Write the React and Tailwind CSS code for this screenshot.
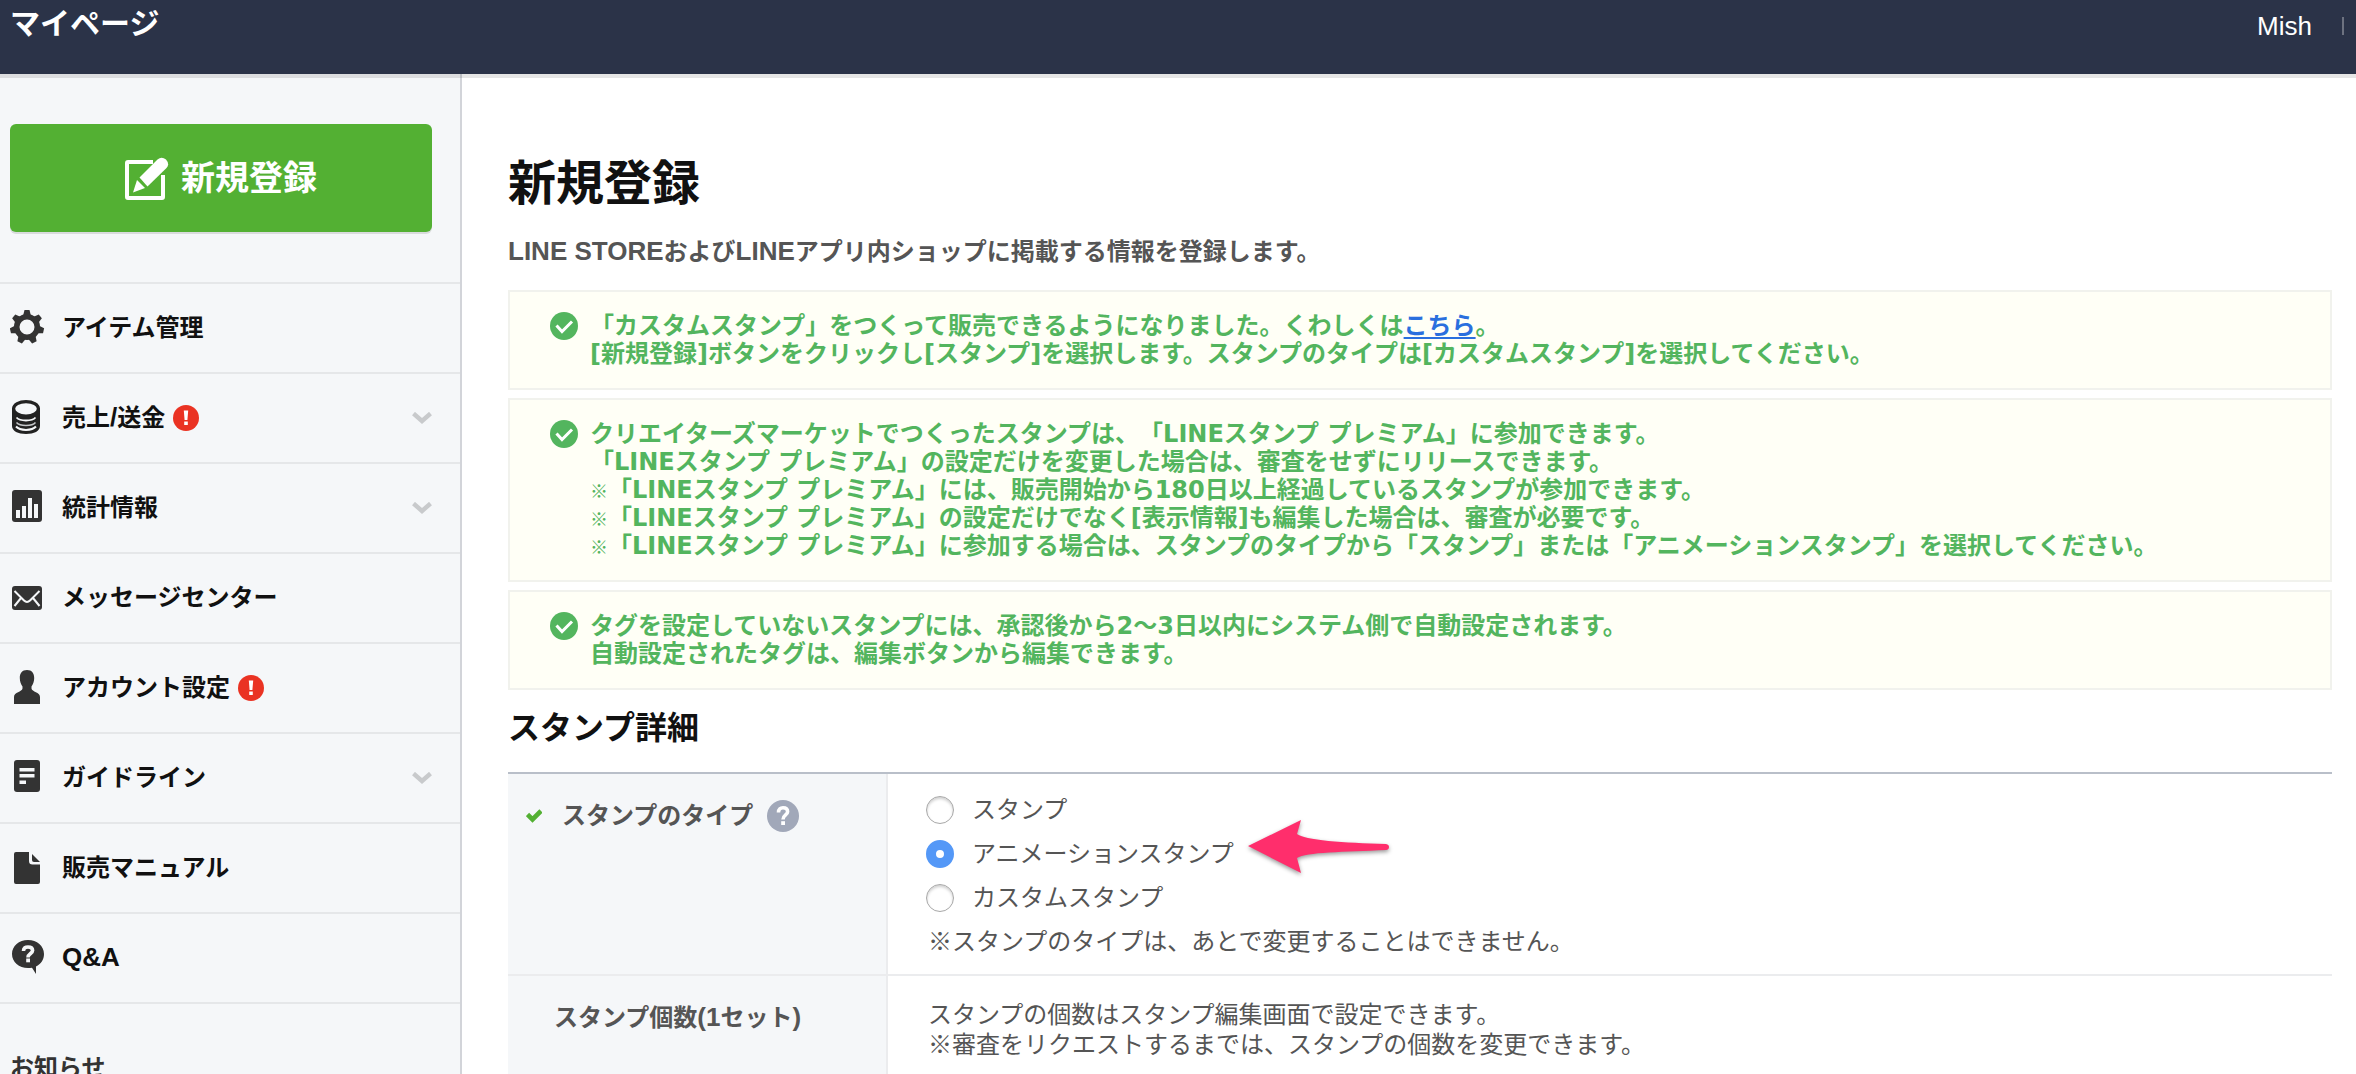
import { useState } from "react"

const menuItems = [
  { id: "items", label: "アイテム管理", icon: GearIcon },
  { id: "sales", label: <>売上<Latin>/</Latin>送金</>, icon: CoinsIcon, alert: true, expandable: true },
  { id: "stats", label: "統計情報", icon: ChartIcon, expandable: true },
  { id: "messages", label: "メッセージセンター", icon: MailIcon },
  { id: "account", label: "アカウント設定", icon: UserIcon, alert: true },
  { id: "guideline", label: "ガイドライン", icon: GuideIcon, expandable: true },
  { id: "manual", label: "販売マニュアル", icon: FileIcon },
  { id: "qa", label: <Latin>Q&A</Latin>, icon: QuestionIcon },
]

const stampTypes = [
  { id: "stamp", label: "スタンプ" },
  { id: "animation", label: "アニメーションスタンプ" },
  { id: "custom", label: "カスタムスタンプ" },
]

// Latin letters are set a little larger so they stand level with the kana
function Latin({ children }) {
  return <span className="text-[26px] leading-none">{children}</span>
}

function GearIcon() {
  return (
    <svg className="w-9 h-9" viewBox="0 0 36 36" fill="#333333">
      {[0, 1, 2, 3, 4, 5, 6].map((tooth) => (
        <path key={tooth} d="M13 6 L14.500 0 H19.500 L21 6 Z" transform={`rotate(${(tooth * 360) / 7} 17 17)`} />
      ))}
      <circle cx="17" cy="17" r="10.300" fill="none" stroke="#333333" strokeWidth="5.600" />
    </svg>
  )
}

function CoinsIcon() {
  return (
    <svg className="w-9 h-9" viewBox="0 0 36 36" fill="none">
      <path d="M2 8 V26 C2 31 8 34 16 34 S30 31 30 26 V8 Z" fill="#222222" />
      <ellipse cx="16" cy="8.800" rx="12.400" ry="7.200" fill="#f5f7f9" stroke="#222222" strokeWidth="3.200" />
      <path d="M6.500 17.500 C10 21.500 22 21.500 25.500 17.500" stroke="#f5f7f9" strokeWidth="1.800" />
      <path d="M6.500 22.500 C10 26.500 22 26.500 25.500 22.500" stroke="#c5c7c9" strokeWidth="1.500" />
      <path d="M6 26.500 C10 31 22 31 26 26.500" stroke="#f5f7f9" strokeWidth="2" />
    </svg>
  )
}

function ChartIcon() {
  return (
    <svg className="w-9 h-9" viewBox="0 0 36 36">
      <rect x="2" y="0" width="30" height="32" rx="3" fill="#333333" />
      <path d="M6 20 h4 v8 h-4 z M12 16 h4 v12 h-4 z M18 8 h4 v20 h-4 z M24 14 h4 v14 h-4 z" fill="#f5f7f9" />
    </svg>
  )
}

function MailIcon() {
  return (
    <svg className="w-9 h-9" viewBox="0 0 36 36" fill="none">
      <rect x="2" y="6" width="30" height="24" rx="3" fill="#333333" />
      <path
        d="M4.500 11 L14 20.500 Q17 23.500 20 20.500 L29.500 11 M4.500 26 L11 18 M29.500 26 L23 18"
        stroke="#f5f7f9"
        strokeWidth="2"
      />
    </svg>
  )
}

function UserIcon() {
  return (
    <svg className="w-9 h-9" viewBox="0 0 36 36" fill="#333333">
      <path d="M17 0 C12 0 9.800 3.500 9.800 8 C9.800 11.500 11 14.500 12.500 16.500 V18.500 C12 22 4 22 4 27 V34 H30 V27 C30 22 22 22 21.500 18.500 V16.500 C23 14.500 24.200 11.500 24.200 8 C24.200 3.500 22 0 17 0 Z" />
    </svg>
  )
}

function GuideIcon() {
  return (
    <svg className="w-9 h-9" viewBox="0 0 36 36">
      <rect x="4" y="0" width="26" height="32" rx="3" fill="#333333" />
      <path d="M9.500 8 h15 v3.600 h-15 z M9.500 14 h15 v3.600 h-15 z M9.500 20.400 h6.500 v3.600 h-6.500 z" fill="#f5f7f9" />
    </svg>
  )
}

function FileIcon() {
  return (
    <svg className="w-9 h-9" viewBox="0 0 36 36" fill="#333333">
      <path d="M6 2 H19 V11 Q19 14.500 22.500 14.500 H30 V32 Q30 34 28 34 H6 Q4 34 4 32 V4 Q4 2 6 2 Z" />
      <path d="M22 4 L30 12 H24 Q22 12 22 10 Z" />
    </svg>
  )
}

function QuestionIcon() {
  return (
    <svg className="w-9 h-9" viewBox="0 0 36 36" fill="none">
      <path
        d="M18 0 C9 0 2 6 2 14 C2 22 9 28 18 28 C19.500 28 20.500 28 22 27.700 L26 34 V26.500 C31 24 34 19.500 34 14 C34 6 27 0 18 0 Z"
        fill="#333333"
      />
      <path d="M13.500 11 C13.500 7.800 15.500 7 18 7 C20.800 7 22.600 8.200 22.600 10.500 C22.600 13.500 18 13.500 18 17.500" stroke="#f5f7f9" strokeWidth="3.600" />
      <rect x="16.200" y="18.500" width="3.800" height="3.800" fill="#f5f7f9" />
    </svg>
  )
}

function PencilIcon() {
  return (
    <svg className="w-11 h-11" viewBox="0 0 44 44" fill="none">
      <path d="M28 6 H3 Q2 6 2 7 V41 Q2 42 3 42 H37 Q38 42 38 41 V19" stroke="white" strokeWidth="4" />
      <path d="M14.500 21.500 L32.500 3.500 Q36.500 0 41 3.500 Q45 8 41.500 12 L22.500 30.500 Z" fill="white" />
      <path d="M8 36.500 L12 24 L20 32 Z" fill="white" />
    </svg>
  )
}

function AlertIcon() {
  return (
    <svg className="w-[26px] h-[26px]" viewBox="0 0 26 26">
      <circle cx="13" cy="13" r="13" fill="#ea3323" />
      <path d="M10.800 5.500 H15.200 L14.400 15 H11.600 Z M11.200 16.500 H14.800 V20 H11.200 Z" fill="white" />
    </svg>
  )
}

function ChevronIcon() {
  return (
    <svg className="w-5 h-3 ml-auto" viewBox="0 0 20 12" fill="none">
      <path d="M1.500 1.500 L10 9 L18.500 1.500" stroke="#c8cacc" strokeWidth="4.400" />
    </svg>
  )
}

const CheckCircleIcon = () => (
  <svg className="w-7 h-7 shrink-0" viewBox="0 0 28 28" fill="none">
    <circle cx="14" cy="14" r="14" fill="#53b55e" />
    <path d="M6.500 13.500 L12 19.500 L22 9.500" stroke="white" strokeWidth="3" />
  </svg>
)

const Notice = ({ children }) => (
  <div className="flex gap-3 px-10 py-5 border-2 border-[#f1f2ed] bg-[#fffff6]">
    <CheckCircleIcon />
    <div className="text-2xl leading-7 font-bold text-[#53b55e] font-['DejaVu_Sans','Noto_Sans_CJK_JP',sans-serif]">
      {children}
    </div>
  </div>
)

const Kome = () => <span className="text-lg leading-none font-['Noto_Sans_CJK_JP',sans-serif]">※</span>

const Sidebar = () => (
  <aside className="w-[462px] shrink-0 border-r-2 border-[#d2d4d9] bg-[#f5f7f9] pt-[50px]">
    <div className="pl-2.5 pr-7">
      <button className="w-full h-[108px] flex items-center justify-center gap-3 rounded-md bg-[#53b033] text-[34px] font-bold text-white shadow-[0_2px_0_#d9dbdd]">
        <PencilIcon />
        新規登録
      </button>
    </div>
    <nav className="mt-[50px] border-b-2 border-[#e5e7e9]">
      {menuItems.map((item) => (
        <a
          key={item.id}
          href={`#${item.id}`}
          className="h-[90px] flex items-center border-t-2 border-[#e5e7e9] pl-2.5 pr-7 text-2xl font-bold text-[#111111]"
        >
          <item.icon />
          <span className="ml-4 mr-2">{item.label}</span>
          {item.alert && <AlertIcon />}
          {item.expandable && <ChevronIcon />}
        </a>
      ))}
    </nav>
    <h2 className="mt-12 pl-2.5 text-2xl font-bold text-[#333333]">お知らせ</h2>
  </aside>
)

const App = () => {
  const [stampType, setStampType] = useState("animation")

  return (
    <div
      lang="ja"
      className="h-screen flex flex-col overflow-hidden bg-white font-['Liberation_Sans','Noto_Sans_CJK_JP',sans-serif] [text-spacing-trim:space-all]"
    >
      <header className="h-[74px] shrink-0 flex items-start justify-between bg-[#2b3348] pl-2.5 pr-3 text-white shadow-[0_4px_0_rgba(0,0,0,0.1)] relative">
        <span className="text-3xl leading-12 font-bold">マイページ</span>
        <div className="flex items-center gap-[30px] pt-2.5">
          <span className="text-[26px] leading-8">Mish</span>
          <span className="w-0.5 h-[18px] bg-[#6d7280]" />
        </div>
      </header>

      <div className="flex flex-1 min-h-0">
        <Sidebar />

        <main className="flex-1 pl-[46px] pr-6 pt-[78px]">
          <h1 className="text-5xl leading-16 font-bold text-[#111111]">新規登録</h1>
          <p className="mt-5 text-2xl leading-8 font-bold text-[#555555]">
            <Latin>LINE STORE</Latin>および<Latin>LINE</Latin>アプリ内ショップに掲載する情報を登録します。
          </p>

          <div className="mt-[22px] flex flex-col gap-2">
            <Notice>
              <p>
                「カスタムスタンプ」をつくって販売できるようになりました。くわしくは
                <a href="#custom" className="text-[#2a6fde] underline underline-offset-3 decoration-2">こちら</a>。
              </p>
              <p>[新規登録]ボタンをクリックし[スタンプ]を選択します。スタンプのタイプは[カスタムスタンプ]を選択してください。</p>
            </Notice>
            <Notice>
              <p>クリエイターズマーケットでつくったスタンプは、「LINEスタンプ プレミアム」に参加できます。</p>
              <p>「LINEスタンプ プレミアム」の設定だけを変更した場合は、審査をせずにリリースできます。</p>
              <p><Kome />「LINEスタンプ プレミアム」には、販売開始から180日以上経過しているスタンプが参加できます。</p>
              <p><Kome />「LINEスタンプ プレミアム」の設定だけでなく[表示情報]も編集した場合は、審査が必要です。</p>
              <p><Kome />「LINEスタンプ プレミアム」に参加する場合は、スタンプのタイプから「スタンプ」または「アニメーションスタンプ」を選択してください。</p>
            </Notice>
            <Notice>
              <p>タグを設定していないスタンプには、承認後から2〜3日以内にシステム側で自動設定されます。</p>
              <p>自動設定されたタグは、編集ボタンから編集できます。</p>
            </Notice>
          </div>

          <h2 className="mt-3.5 text-[32px] leading-12 font-bold text-[#111111]">スタンプ詳細</h2>

          <table className="mt-5 w-full border-t-2 border-[#b9bfc9] border-separate border-spacing-0 text-2xl text-[#555555]">
            <tbody>
              <tr>
                <th className="w-[380px] border-r-2 border-b-2 border-[#ebecee] bg-[#f5f7f9] pt-6.5 pl-4.5 align-top text-left font-bold">
                  <div className="flex items-center">
                    <svg className="w-4 h-4" viewBox="0 0 16 16" fill="none">
                      <path d="M1.500 6.500 L6.500 11.500 L15 3" stroke="#53b033" strokeWidth="4.600" />
                    </svg>
                    <span className="ml-5 mr-3.5 leading-8">スタンプのタイプ</span>
                    <button aria-label="ヘルプ">
                      <svg className="w-8 h-8" viewBox="0 0 32 32" fill="none">
                        <circle cx="16" cy="16" r="16" fill="#a1a8b9" />
                        <path
                          d="M11.500 12.500 C11.500 9 13.500 7.800 16 7.800 C18.800 7.800 20.600 9.300 20.600 11.800 C20.600 15 16 15 16 19.500"
                          stroke="white"
                          strokeWidth="3.600"
                        />
                        <rect x="14.200" y="21.200" width="3.800" height="3.800" fill="white" />
                      </svg>
                    </button>
                  </div>
                </th>
                <td className="border-b-2 border-[#ebecee] pt-3.5 pb-2.5 pl-9.5 align-top">
                  {stampTypes.map((type) => (
                    <div key={type.id} className="h-11 flex items-center">
                      <label className="relative flex items-center gap-4.5">
                        <input
                          type="radio"
                          name="stampType"
                          value={type.id}
                          checked={stampType === type.id}
                          onChange={() => setStampType(type.id)}
                          className="appearance-none w-7 h-7 rounded-full border border-[#a8a8a8] bg-white shadow-[inset_0_2px_3px_#d0d0d0] checked:border-[10px] checked:border-[#5498f7] checked:shadow-none"
                        />
                        {type.label}
                        {type.id === "animation" && (
                          <svg
                            className="absolute left-full top-1/2 -translate-y-1/2 ml-3.5 w-36 h-16 overflow-visible drop-shadow-[0_2px_2px_rgba(0,0,0,0.4)]"
                            viewBox="0 0 144 64"
                            fill="#ff2e6c"
                          >
                            <path d="M0 24 L53 -2 L49 12 C56 18 96 21 138 22 Q141 22.500 141 25 Q141 27.500 138 28 C96 30 58 30 49 36 L53 51 Z" />
                          </svg>
                        )}
                      </label>
                    </div>
                  ))}
                  <p className="pl-0.5 leading-11">※スタンプのタイプは、あとで変更することはできません。</p>
                </td>
              </tr>
              <tr>
                <th className="border-r-2 border-[#ebecee] bg-[#f5f7f9] pt-6.5 pl-11.5 pb-6.5 align-top text-left font-bold leading-8">
                  スタンプ個数<Latin>(1</Latin>セット<Latin>)</Latin>
                </th>
                <td className="pt-6 pl-10 pb-6 align-top leading-[30px]">
                  <p>スタンプの個数はスタンプ編集画面で設定できます。</p>
                  <p>※審査をリクエストするまでは、スタンプの個数を変更できます。</p>
                </td>
              </tr>
            </tbody>
          </table>
        </main>
      </div>
    </div>
  )
}

export default App
